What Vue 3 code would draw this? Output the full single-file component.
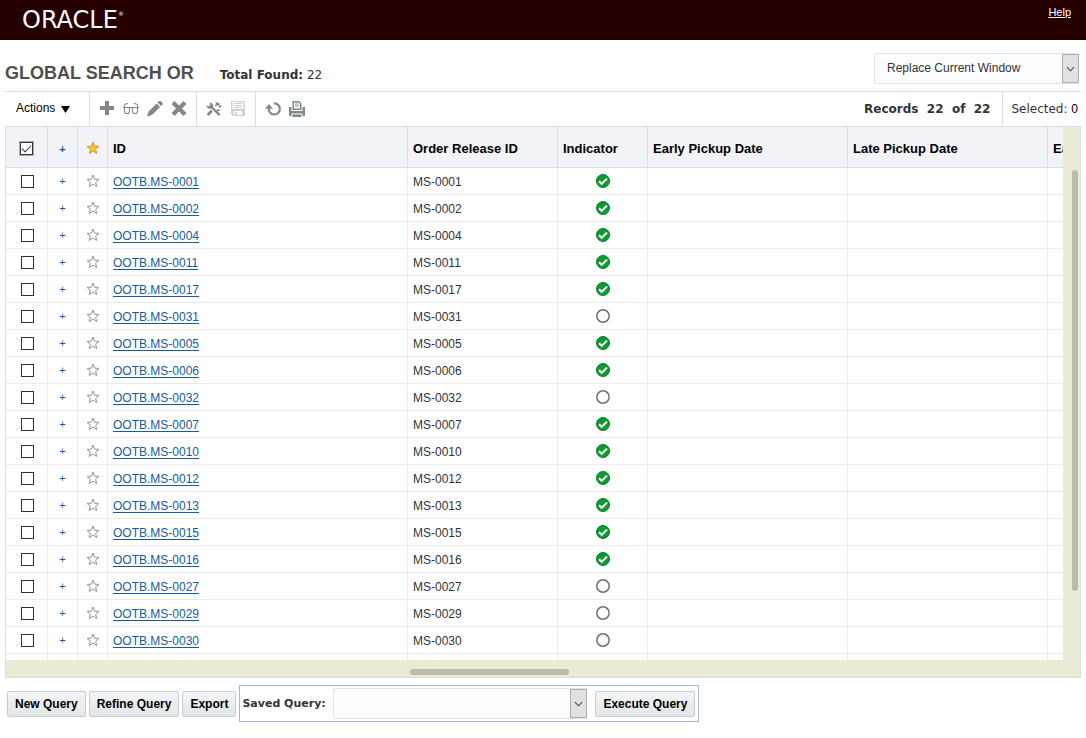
<template>
  <div class="page">
    <header class="banner">
      <div class="brand">ORACLE<sup>®</sup></div>
      <a class="help" href="#">Help</a>
    </header>

    <main class="content">
      <div class="title-row">
        <h1>GLOBAL SEARCH OR</h1>
        <p class="found"><b>Total Found:</b> {{ total }}</p>
        <div class="picker window-picker">
          <select v-model="target" aria-label="Open results in">
            <option>Replace Current Window</option>
            <option>New Window</option>
          </select>
          <span class="arrow">
            <svg viewBox="0 0 10 6"><path d="M1 1l4 4 4-4" /></svg>
          </span>
        </div>
      </div>

      <div class="toolbar">
        <button class="actions" type="button">
          Actions
          <svg viewBox="0 0 9 7"><path d="M0 0h9L4.500 7z" /></svg>
        </button>
        <div class="tools">
          <button type="button" aria-label="New">
            <svg viewBox="0 0 16 16"><path d="M6 0h4v5h5v4h-5v5H6V9H1V5h5z" /></svg>
          </button>
          <button type="button" aria-label="View">
            <svg class="line" viewBox="0 0 16 16">
              <path d="M0 6.500h16M1 6C1.300 3.500 2.500 2.500 5 2.500M15 6c-.3-2.500-1.500-3.500-4-3.500" />
              <path d="M1.500 6.500v4l1 2h3l1-2v-4M9.500 6.500v4l1 2h3l1-2v-4" />
            </svg>
          </button>
          <button type="button" aria-label="Edit">
            <svg viewBox="0 0 16 16">
              <path d="M0 15.500l1.500-5L9.600 2.400l3.500 3.500L5 14zM10.500 1.500L12 0q.8-.6 1.600 0l1.900 1.900q.8.800 0 1.600L14 5z" />
            </svg>
          </button>
          <button type="button" aria-label="Delete">
            <svg viewBox="0 0 16 16">
              <path d="M3.500 0L8 4.500 12.500 0l3 3L11 7.500l4.500 4.500-3 3L8 10.500 3.500 15l-3-3L5 7.500.5 3z" />
            </svg>
          </button>
        </div>
        <div class="tools">
          <button type="button" aria-label="Customize">
            <svg viewBox="0 0 16 16">
              <path d="M3.500 1.500L6 2.200 7.500 4.500 7 6l7.500 7.200-1.700 1.700L5.500 7.500 4 8 1 6.500.5 4.500l2.300.8 1.700-1.500z" />
              <path d="M9 1.500q3-1 5 1.500l-1 1 1 .8 1-.6.700.8-1.700 2-1-.800-.300-1.200-1-1-1.700 1.500-1.400-1.300L10.500 3zM5 8.700l1.800 1.700-3.300 3.800q-1.300.8-2.200-.2-.600-1 .2-1.900zM10.500 8.500q2.500-.8 4 1.200l-2.300.3-.2 1.500z" />
            </svg>
          </button>
          <button type="button" aria-label="Save" disabled>
            <svg viewBox="0 0 16 16">
              <path fill-rule="evenodd" d="M1 0h14v15H3l-2-2zM2.500 1v7h11V1zM4 10v4h8v-4z" />
              <path d="M4 2h8v1H4zM4 4h8v1H4zM4 6h8v1H4zM5 11h2v3H5z" />
            </svg>
          </button>
        </div>
        <div class="tools last">
          <button type="button" aria-label="Refresh">
            <svg viewBox="0 0 16 16">
              <path class="arc" d="M9 2.300a5.600 5.600 0 1 1-5.300 5" />
              <path d="M0 7.800L4 3l4 4.800z" />
            </svg>
          </button>
          <button type="button" aria-label="Print">
            <svg viewBox="0 0 16 16">
              <path fill-rule="evenodd" d="M3.500 0H10l2.500 2.500V9h-9zM5 1.500v6h6V3L9.500 1.500z" />
              <path d="M6 2.500h3v1H6zM6 4.500h4v1H6zM0 6h2.500v4h11V6H16v9h-2.500v-2.500h-11V15H0zM3.500 13.500h9V16h-9z" />
            </svg>
          </button>
        </div>
        <div class="records">Records&nbsp; {{ total }}&nbsp; of&nbsp; {{ total }}</div>
        <div class="selected">Selected: <span>{{ selected.length }}</span></div>
      </div>

      <section class="grid">
        <div class="viewport">
          <table>
            <colgroup>
              <col class="c-check" /><col class="c-mark" /><col class="c-mark" />
              <col class="c-id" /><col class="c-release" /><col class="c-ind" />
              <col class="c-date" /><col class="c-date" /><col class="c-date" />
            </colgroup>
            <thead>
              <tr>
                <th class="mid"><input v-model="allBox" type="checkbox" aria-label="Select all" /></th>
                <th class="mid"><button class="plus" type="button" aria-label="Expand all">+</button></th>
                <th class="mid">
                  <button class="star gold" type="button" aria-label="Favorites">
                    <svg viewBox="0 0 14 14"><path :d="starPath" /></svg>
                  </button>
                </th>
                <th v-for="name in columns" :key="name">{{ name }}</th>
              </tr>
            </thead>
            <tbody>
              <tr v-for="row in rows" :key="row.id">
                <td class="mid">
                  <input v-model="selected" type="checkbox" :value="row.id" :aria-label="'Select ' + row.id" />
                </td>
                <td class="mid"><button class="plus" type="button" aria-label="Expand">+</button></td>
                <td class="mid">
                  <button class="star" type="button" aria-label="Favorite">
                    <svg viewBox="0 0 14 14"><path :d="starPath" /></svg>
                  </button>
                </td>
                <td><a href="#">OOTB.{{ row.id }}</a></td>
                <td>{{ row.id }}</td>
                <td class="mid">
                  <svg v-if="row.ok" class="dot ok" viewBox="0 0 14 14">
                    <circle cx="7" cy="7" r="6.500" />
                    <path d="M3 7.300l2.700 2.500 5.300-5.200" />
                  </svg>
                  <svg v-else class="dot" viewBox="0 0 14 14"><circle cx="7" cy="7" r="6.200" /></svg>
                </td>
                <td></td>
                <td></td>
                <td></td>
              </tr>
            </tbody>
          </table>
        </div>
        <div class="track vertical"><div class="thumb"></div></div>
        <div class="track horizontal"><div class="thumb"></div></div>
      </section>

      <footer class="footer">
        <button class="btn" type="button">New Query</button>
        <button class="btn" type="button">Refine Query</button>
        <button class="btn" type="button">Export</button>
        <div class="saved">
          <label for="saved-query">Saved Query:</label>
          <div class="picker saved-picker">
            <select id="saved-query" v-model="query">
              <option value=""></option>
            </select>
            <span class="arrow">
              <svg viewBox="0 0 10 6"><path d="M1 1l4 4 4-4" /></svg>
            </span>
          </div>
          <button class="btn" type="button">Execute Query</button>
        </div>
      </footer>
    </main>
  </div>
</template>

<script setup>
import { ref } from "vue";

const total = 22;
const target = ref("Replace Current Window");
const query = ref("");
const allBox = ref(true);
const selected = ref([]);

const columns = [
  "ID",
  "Order Release ID",
  "Indicator",
  "Early Pickup Date",
  "Late Pickup Date",
  "Early Delivery Date",
];

const empty = ["0031", "0032", "0027", "0029", "0030", "0028"];
const rows = [
  "0001", "0002", "0004", "0011", "0017", "0031", "0005", "0006", "0032", "0007",
  "0010", "0012", "0013", "0015", "0016", "0027", "0029", "0030", "0028",
].map((n) => ({ id: "MS-" + n, ok: !empty.includes(n) }));

const starPath =
  "M7 1l1.600 4.200 4.400.2-3.400 2.800 1.100 4.300L7 10.100l-3.700 2.400 1.100-4.300L1 5.400l4.400-.2z";
</script>

<style>
body {
  margin: 0;
  background: #fff;
}
</style>

<style scoped>
.page {
  font: 12px/16px "Liberation Sans", Arial, sans-serif;
  color: #333;
}
button,
select {
  font: inherit;
  color: inherit;
}
button {
  padding: 0;
  border: 0;
  background: none;
}
.banner {
  display: flex;
  justify-content: space-between;
  height: 40px;
  padding: 0 15px 0 22px;
  background: #270000;
  color: #fff;
}
.brand {
  font: 24px/40px "DejaVu Sans", Verdana, sans-serif;
}
.brand sup {
  font-size: 6px;
  line-height: 6px;
  vertical-align: 12px;
}
.help {
  font-size: 11px;
  line-height: 24px;
  color: #fff;
}
.content {
  padding: 0 5px;
}
.title-row {
  display: flex;
  align-items: center;
  height: 51px;
}
h1 {
  margin: 14px 26px 0 0;
  font-size: 18px;
  line-height: 22px;
  color: #4f4f4f;
}
.found {
  flex: 1;
  margin: 18px 0 0;
  font: 12px/16px "DejaVu Sans", Verdana, sans-serif;
}
.picker {
  position: relative;
  height: 31px;
}
.picker select {
  appearance: none;
  width: 100%;
  height: 31px;
  padding: 0 20px 2px 12px;
  border: 1px solid #dfe4e7;
  border-radius: 2px;
  background: #fcfdfe;
}
.window-picker {
  width: 205px;
  margin: 6px 2px 0 0;
}
.arrow {
  position: absolute;
  top: 1px;
  right: 0;
  bottom: 1px;
  display: grid;
  place-items: center;
  width: 15px;
  border: 1px solid #adadad;
  background: #e1e1e1;
  pointer-events: none;
}
.arrow svg {
  width: 9px;
  height: 6px;
  fill: none;
  stroke: #444;
  stroke-width: 1.2;
}
.toolbar {
  display: flex;
  height: 34px;
  border-top: 1px solid #d6dfe6;
}
.actions {
  display: flex;
  align-items: center;
  gap: 6px;
  width: 84px;
  padding: 0 0 2px 11px;
  color: #000;
}
.actions svg {
  width: 9px;
  height: 7px;
  margin-top: 2px;
}
.tools {
  display: flex;
  align-items: center;
  gap: 8px;
  padding: 0 9px;
  border-left: 1px solid #d6dfe6;
}
.tools button {
  width: 16px;
  height: 16px;
}
.tools svg {
  display: block;
  width: 16px;
  height: 16px;
  fill: #81888c;
}
.tools button:disabled svg {
  fill: #cfd2d4;
}
.tools .line {
  fill: none;
  stroke: #81888c;
  stroke-width: 1.1;
}
.arc {
  fill: none;
  stroke: #81888c;
  stroke-width: 2.2;
}
.last {
  flex: 1;
}
.records,
.selected {
  font: 12px/34px "DejaVu Sans", Verdana, sans-serif;
}
.records {
  padding-right: 12px;
  font-weight: bold;
  white-space: nowrap;
}
.selected {
  padding: 0 3px 0 8px;
  border-left: 1px solid #d6dfe6;
}
.selected span {
  font: 12px "Liberation Sans", Arial, sans-serif;
  color: #000;
}
.grid {
  display: grid;
  grid-template-columns: minmax(0, 1fr) 17px;
  grid-template-rows: calc(100vh - 205px) 17px;
  border: 1px solid #d6dfe6;
}
.viewport {
  overflow: hidden;
}
table {
  width: 1242px;
  table-layout: fixed;
  border-collapse: separate;
  border-spacing: 0;
}
.c-check {
  width: 42px;
}
.c-mark {
  width: 30px;
}
.c-id {
  width: 300px;
}
.c-release {
  width: 150px;
}
.c-ind {
  width: 90px;
}
.c-date {
  width: 200px;
}
th,
td {
  box-sizing: border-box;
  padding: 0 5px;
  text-align: left;
  white-space: nowrap;
}
th {
  height: 41px;
  padding-top: 3px;
  border-right: 1px solid #d6dfe6;
  border-bottom: 1px solid #d6dfe6;
  background: #f2f3f8;
  font-size: 13px;
  color: #000;
}
td {
  height: 27px;
  padding-top: 1px;
  border-right: 1px solid #ebebeb;
  border-bottom: 1px solid #ebebeb;
}
th.mid {
  padding: 2px 0 0;
}
td.mid {
  padding: 0;
}
td a {
  color: #145c9e;
  text-underline-offset: 2px;
}
input {
  appearance: none;
  display: block;
  width: 13px;
  height: 13px;
  margin: 0 0 0 15px;
  border: 1px solid #333;
  background: #fff;
}
input:checked {
  outline: 1px solid #aaa;
}
th input {
  margin-left: 14px;
}
input:checked::before {
  content: "";
  display: block;
  width: 9px;
  height: 5px;
  margin: 2px 0 0 1px;
  box-sizing: border-box;
  border: solid #333;
  border-width: 0 0 1px 1px;
  transform: rotate(-45deg);
}
.plus {
  display: block;
  width: 100%;
  font-size: 11px;
  line-height: 16px;
  color: #145c9e;
}
th .plus {
  padding-top: 1px;
  font-weight: bold;
}
.star {
  display: block;
  margin: 0 auto;
}
.star svg {
  display: block;
  width: 14px;
  height: 14px;
  fill: #fff;
  stroke: #949494;
}
td .star {
  padding-bottom: 1px;
}
.star.gold svg {
  fill: #fbc52d;
  stroke: #c99a35;
}
.dot {
  display: block;
  width: 14px;
  height: 14px;
  margin: 0 auto;
  fill: #fff;
  stroke: #6e6e6e;
  stroke-width: 1.500;
}
.ok circle {
  fill: #0b9b31;
  stroke: #087d27;
  stroke-width: 1;
}
.ok path {
  fill: none;
  stroke: #fff;
  stroke-width: 2;
}
.track {
  background: #ebead5;
}
.vertical .thumb {
  width: 6px;
  height: 79%;
  margin: 43px 0 0 9px;
}
.vertical {
  display: flex;
}
.horizontal {
  grid-column: 1 / -1;
  display: flex;
}
.horizontal .thumb {
  width: 159px;
  height: 6px;
  margin: 9px 0 0 404px;
}
.thumb {
  border-radius: 3px;
  background: #bcbba9;
}
.footer {
  display: flex;
  align-items: center;
  gap: 3px;
  padding: 7px 2px;
}
.btn {
  height: 26px;
  padding: 0 7px;
  border: 1px solid #c4ced7;
  border-radius: 2px;
  background: linear-gradient(#f3f4f5, #e2e6e9);
  font-weight: bold;
  color: #000;
  white-space: nowrap;
}
.saved {
  display: flex;
  align-items: center;
  padding: 2px 3px 2px 2px;
  border: 1px solid #9fbad9;
}
.saved label {
  width: 91px;
  font: bold 11px/16px "DejaVu Sans", Verdana, sans-serif;
}
.saved-picker {
  width: 254px;
  margin-right: 8px;
}
</style>
